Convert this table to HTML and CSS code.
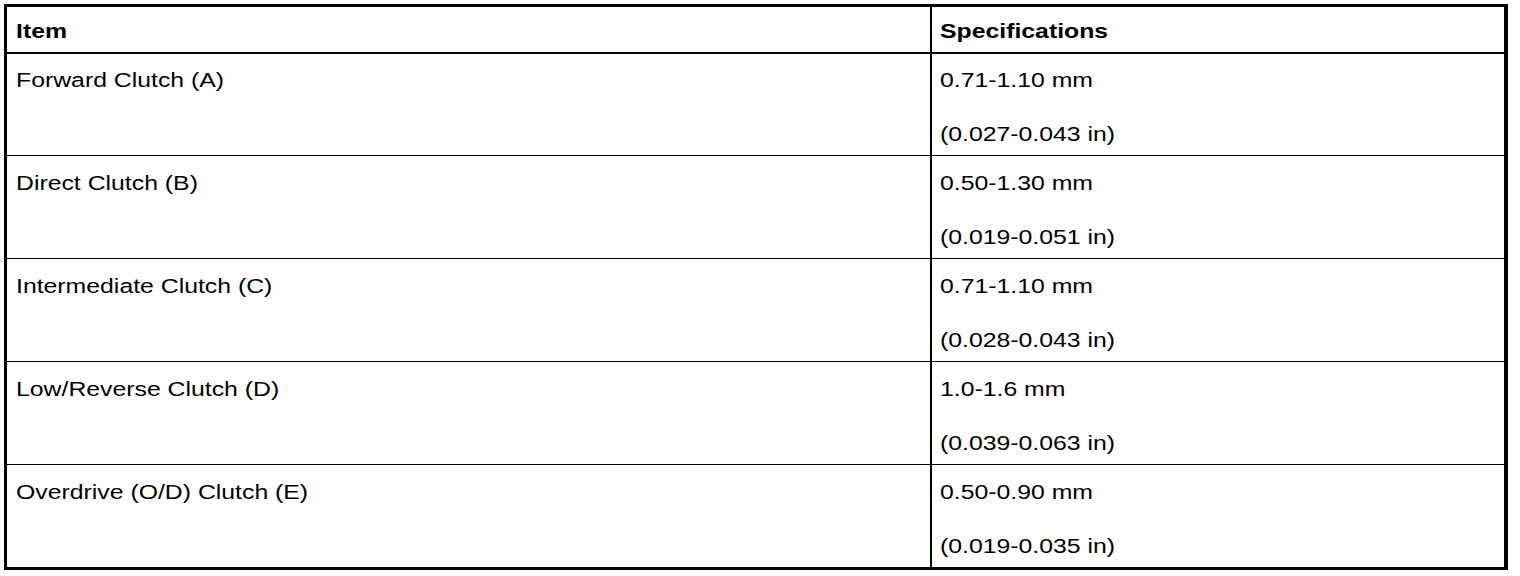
FILE: index.html
```html
<!DOCTYPE html>
<html>
<head>
<meta charset="utf-8">
<link rel="stylesheet" href="styles.css">
</head>
<body>
<div class="spec-table">
  <div class="cell head left"><span class="t">Item</span></div>
  <div class="cell head"><span class="t">Specifications</span></div>

  <div class="cell row first left"><div class="line"><span class="t">Forward Clutch (A)</span></div></div>
  <div class="cell row first"><div class="line"><span class="t">0.71-1.10 mm</span></div><div class="line"><span class="t">(0.027-0.043 in)</span></div></div>

  <div class="cell row left"><div class="line"><span class="t">Direct Clutch (B)</span></div></div>
  <div class="cell row"><div class="line"><span class="t">0.50-1.30 mm</span></div><div class="line"><span class="t">(0.019-0.051 in)</span></div></div>

  <div class="cell row left"><div class="line"><span class="t">Intermediate Clutch (C)</span></div></div>
  <div class="cell row"><div class="line"><span class="t">0.71-1.10 mm</span></div><div class="line"><span class="t">(0.028-0.043 in)</span></div></div>

  <div class="cell row left"><div class="line"><span class="t">Low/Reverse Clutch (D)</span></div></div>
  <div class="cell row"><div class="line"><span class="t">1.0-1.6 mm</span></div><div class="line"><span class="t">(0.039-0.063 in)</span></div></div>

  <div class="cell row last left"><div class="line"><span class="t">Overdrive (O/D) Clutch (E)</span></div></div>
  <div class="cell row last"><div class="line"><span class="t">0.50-0.90 mm</span></div><div class="line"><span class="t">(0.019-0.035 in)</span></div></div>
</div>
</body>
</html>
```

FILE: styles.css
```css
html, body {
  margin: 0;
  padding: 0;
  background: #fff;
}
body {
  padding: 4px;
  font-family: "Liberation Sans", Arial, sans-serif;
  font-size: 20px;
  color: #000;
}
.spec-table {
  box-sizing: border-box;
  width: 1504px;
  border-style: solid;
  border-color: #000;
  border-width: 3px 4px 3px 3px;
  display: grid;
  grid-template-columns: 925px 1fr;
}
.cell {
  box-sizing: border-box;
  padding-left: 8px;
}
.cell.left {
  border-right: 2px solid #000;
  padding-left: 9px;
}
.head {
  height: 47px;
  border-bottom: 2px solid #000;
  font-weight: bold;
  line-height: 24px;
  padding-top: 12px;
}
.row {
  height: 103px;
  border-bottom: 1px solid #000;
  padding-top: 15px;
  display: flex;
  flex-direction: column;
  gap: 30px;
}
.row.first {
  height: 102px;
  padding-top: 14px;
}
.row.last {
  height: 102px;
  border-bottom: none;
}
.line {
  line-height: 24px;
  height: 24px;
}
.t {
  display: inline-block;
  white-space: nowrap;
  transform: scaleX(1.24);
  transform-origin: left center;
}
```
